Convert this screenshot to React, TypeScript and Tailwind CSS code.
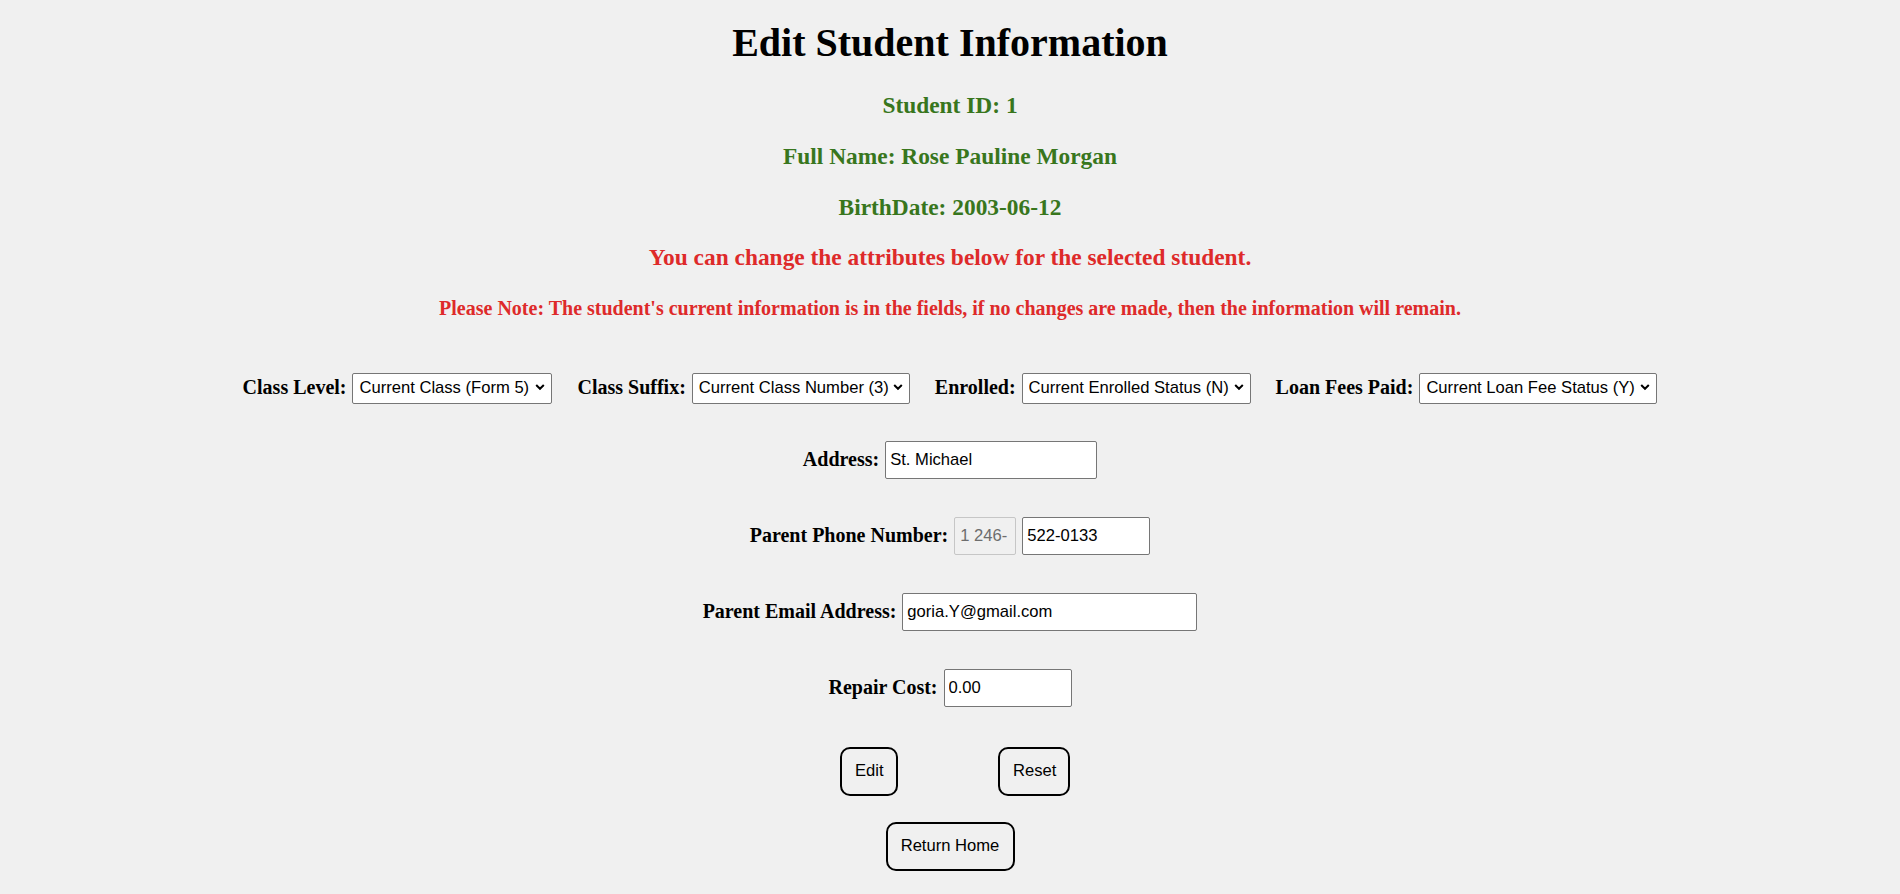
import { useState } from "react";

type Opt = { label: string; width: string; value: string };

const selects: Opt[] = [
  { label: "Class Level:", width: "w-[200px]", value: "Current Class (Form 5)" },
  { label: "Class Suffix:", width: "w-[218px]", value: "Current Class Number (3)" },
  { label: "Enrolled:", width: "w-[229px]", value: "Current Enrolled Status (N)" },
  { label: "Loan Fees Paid:", width: "w-[238px]", value: "Current Loan Fee Status (Y)" },
];

const inputCls =
  "h-[38px] rounded-[2px] border border-[#767676] bg-white px-[4px] font-['Liberation_Sans',Arial,sans-serif] text-[16.6px] text-black outline-none";

const btnCls =
  "h-[49px] rounded-[10px] border-2 border-black bg-transparent px-[13px] font-['Liberation_Sans',Arial,sans-serif] text-[16.6px] text-black";

function Chevron() {
  return (
    <svg width="10" height="7" viewBox="0 0 10 7" className="pointer-events-none absolute right-[7px] top-1/2 -translate-y-1/2">
      <path d="M1.2 1.5l3.8 3.8 3.8-3.8" fill="none" stroke="#000" strokeWidth="2" />
    </svg>
  );
}

export default function App() {
  const [address, setAddress] = useState("St. Michael");
  const [phone, setPhone] = useState("522-0133");
  const [email, setEmail] = useState("goria.Y@gmail.com");
  const [cost, setCost] = useState("0.00");

  return (
    <div className="min-h-screen bg-[#f0f0f0] pt-[20px] text-center font-['Liberation_Serif','Times_New_Roman',serif] text-[20px] text-black">
      <h1 className="text-[40px] font-bold leading-[46px]">Edit Student Information</h1>
      <h3 className="mt-[26px] text-[23.4px] font-bold leading-[27px] text-[#38761d]">Student ID: 1</h3>
      <h3 className="mt-[24px] text-[23.4px] font-bold leading-[27px] text-[#38761d]">Full Name: Rose Pauline Morgan</h3>
      <h3 className="mt-[24px] text-[23.4px] font-bold leading-[27px] text-[#38761d]">BirthDate: 2003-06-12</h3>
      <h3 className="mt-[23px] text-[23.4px] font-bold leading-[27px] text-[#de2a2a]">
        You can change the attributes below for the selected student.
      </h3>
      <h4 className="mt-[26px] text-[20px] font-bold leading-[23px] text-[#de2a2a]">
        Please Note: The student's current information is in the fields, if no changes are made, then the information will remain.
      </h4>

      <form onSubmit={(e) => e.preventDefault()}>
        <div className="mt-[51px] flex items-center justify-center gap-[25px]">
          {selects.map((s) => (
            <div key={s.label} className="flex items-center gap-[6px]">
              <label className="font-bold leading-[23px]">{s.label}</label>
              <div className="relative">
                <select
                  defaultValue={s.value}
                  className={`${s.width} h-[31px] appearance-none rounded-[2px] border border-[#767676] bg-white pl-[6px] text-left font-['Liberation_Sans',Arial,sans-serif] text-[16.6px] text-black outline-none`}
                >
                  <option>{s.value}</option>
                </select>
                <Chevron />
              </div>
            </div>
          ))}
        </div>

        <div className="mt-[37px] flex items-center justify-center gap-[6px]">
          <label className="font-bold leading-[23px]">Address:</label>
          <input className={`${inputCls} w-[212px]`} value={address} onChange={(e) => setAddress(e.target.value)} />
        </div>

        <div className="mt-[38px] flex items-center justify-center gap-[6px]">
          <label className="font-bold leading-[23px]">Parent Phone Number:</label>
          <input
            disabled
            value="1 246-"
            className="h-[38px] w-[62px] rounded-[2px] border border-[#c6c6c6] bg-transparent px-[5px] font-['Liberation_Sans',Arial,sans-serif] text-[16.6px] text-[#6d6d6d]"
          />
          <input className={`${inputCls} w-[128px]`} value={phone} onChange={(e) => setPhone(e.target.value)} />
        </div>

        <div className="mt-[38px] flex items-center justify-center gap-[6px]">
          <label className="font-bold leading-[23px]">Parent Email Address:</label>
          <input className={`${inputCls} w-[295px]`} value={email} onChange={(e) => setEmail(e.target.value)} />
        </div>

        <div className="mt-[38px] flex items-center justify-center gap-[6px]">
          <label className="font-bold leading-[23px]">Repair Cost:</label>
          <input className={`${inputCls} w-[128px]`} value={cost} onChange={(e) => setCost(e.target.value)} />
        </div>

        <div className="ml-[10px] mt-[40px] flex items-center justify-center gap-[100px]">
          <button type="submit" className={`${btnCls} w-[58px]`}>Edit</button>
          <button type="reset" className={`${btnCls} w-[72px]`}>Reset</button>
        </div>

        <div className="mt-[26px] flex justify-center">
          <button type="button" className={`${btnCls} w-[129px]`}>Return Home</button>
        </div>
      </form>
    </div>
  );
}
